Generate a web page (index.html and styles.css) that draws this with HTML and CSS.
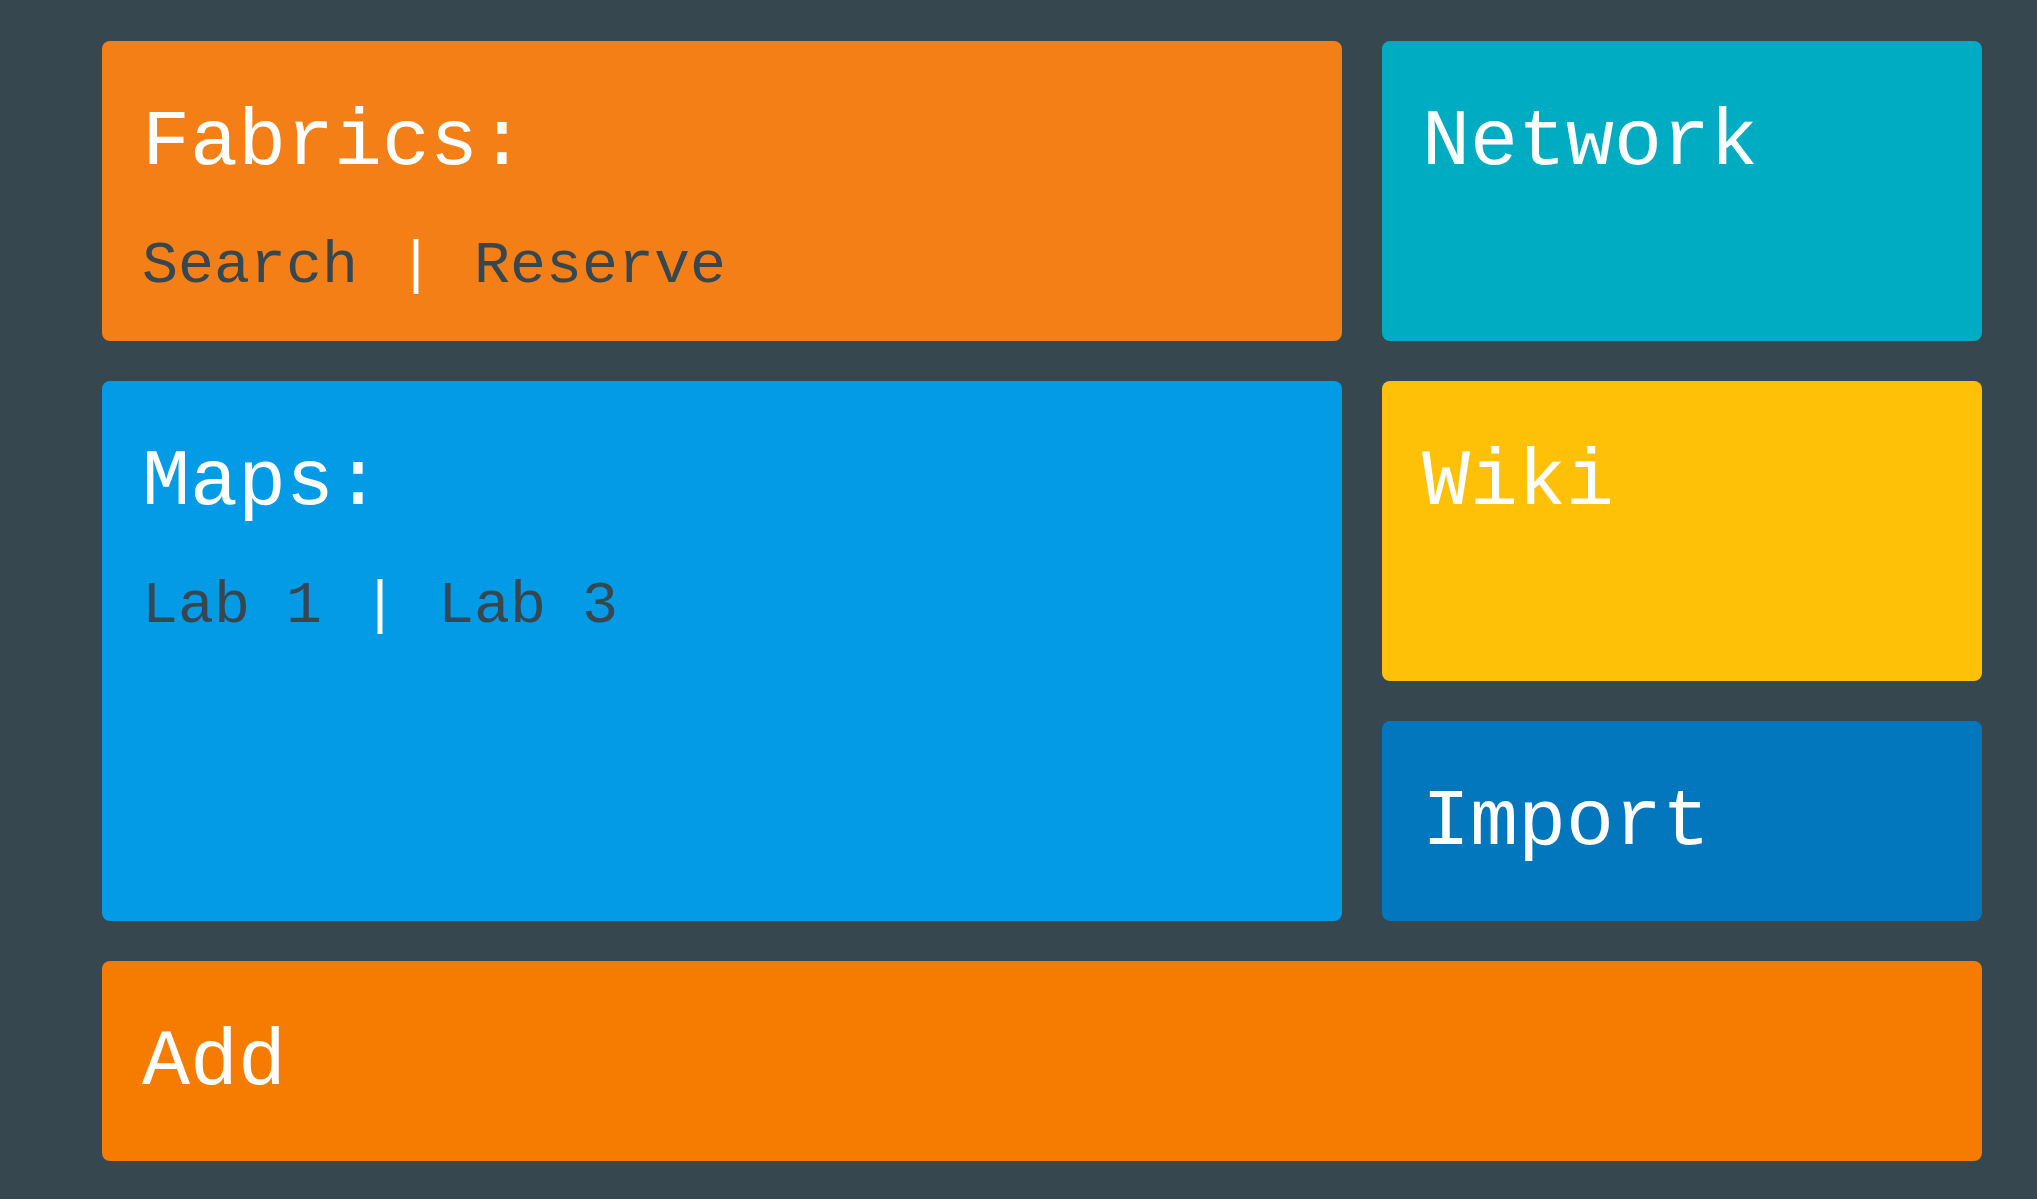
FILE: index.html
```html
<!DOCTYPE html>
<html lang="en">
<head>
  <meta charset="UTF-8">
  <meta name="viewport" content="width=device-width, initial-scale=1.0">
  <title>Lab Portal</title>
  <link rel="stylesheet" href="styles.css">
</head>
<body>
  <!-- Tile board -->
  <div class="board">
    <div class="tile tile-fabrics">
      <h2>Fabrics:</h2>
      <p class="links"><a href="#">Search</a><span class="sep">|</span><a href="#">Reserve</a></p>
    </div>

    <div class="tile tile-network">
      <h2>Network</h2>
    </div>

    <div class="tile tile-maps">
      <h2>Maps:</h2>
      <p class="links"><a href="#">Lab 1</a><span class="sep">|</span><a href="#">Lab 3</a></p>
    </div>

    <div class="tile tile-wiki">
      <h2>Wiki</h2>
    </div>

    <div class="tile tile-import">
      <h2>Import</h2>
    </div>

    <div class="tile tile-add">
      <h2>Add</h2>
    </div>
  </div>
</body>
</html>
```

FILE: styles.css
```css
/* Global reset */
* {
  margin: 0;
  padding: 0;
  box-sizing: border-box;
}

body {
  background-color: #37474f;
  font-family: 'Courier New', 'Liberation Mono', monospace;
}

/* Board layout */
.board {
  display: grid;
  grid-template-columns: 1fr 600px;
  grid-template-rows: 300px 300px 200px 200px;
  gap: 40px;
  padding: 41px 55px 38px 102px;
}

/* Tiles */
.tile {
  border-radius: 8px;
  padding: 62px 40px 0;
  color: #fff;
}

.tile h2 {
  font-size: 80px;
  font-weight: normal;
  line-height: 1;
  white-space: pre;
}

.links {
  margin-top: 53px;
  font-size: 60px;
  line-height: 1;
  white-space: pre;
}

.links a {
  color: #37474f;
  text-decoration: none;
}

.links .sep {
  color: #fff;
  margin: 0 40px;
}

.tile-fabrics {
  background-color: #f57f17;
}

.tile-network {
  background-color: #00acc1;
}

.tile-maps {
  background-color: #039be5;
  grid-row: 2 / 4;
}

.tile-wiki {
  background-color: #ffc107;
}

.tile-import {
  background-color: #0277bd;
}

.tile-add {
  background-color: #f57c00;
  grid-column: 1 / 3;
}
```
